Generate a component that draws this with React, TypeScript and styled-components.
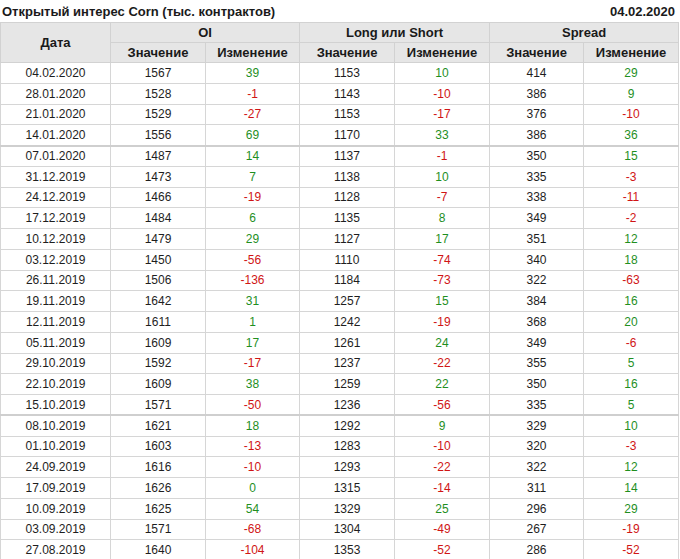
import React from "react";
import styled, { createGlobalStyle } from "styled-components";

const Global = createGlobalStyle`
  html, body { margin: 0; padding: 0; background: #fff; }
  body { font-family: "Liberation Sans", Arial, sans-serif; color: #1e1e1e; }
`;

const Page = styled.div`
  width: 679px;
`;

const TitleBar = styled.div`
  display: flex;
  justify-content: space-between;
  align-items: center;
  height: 22px;
  padding: 0 4px 0 2px;
  font-size: 13px;
  font-weight: bold;
  color: #1a1a1a;
`;

const Table = styled.table`
  width: 679px;
  border-collapse: collapse;
  table-layout: fixed;
  font-size: 12px;
`;

const HeadCell = styled.th`
  background: #e6e6e6;
  border: 1px solid #d2d2d2;
  font-size: 13px;
  font-weight: bold;
  color: #1a1a1a;
  text-align: center;
  padding: 0;
  height: 19px;
`;

const Row = styled.tr<{ $thick?: boolean }>`
  height: 20.75px;
  & > td {
    border-top: ${(p) => (p.$thick ? "2px solid #cfcfcf" : "1px solid #d6d6d6")};
  }
`;

const Cell = styled.td<{ $tone?: "pos" | "neg" }>`
  border: 1px solid #d6d6d6;
  text-align: center;
  padding: 0;
  color: ${(p) => (p.$tone === "pos" ? "#1f8f1f" : p.$tone === "neg" ? "#d01515" : "#1e1e1e")};
`;

type R = [string, number, number, number, number, number, number];

const rows: R[] = [
  ["04.02.2020", 1567, 39, 1153, 10, 414, 29],
  ["28.01.2020", 1528, -1, 1143, -10, 386, 9],
  ["21.01.2020", 1529, -27, 1153, -17, 376, -10],
  ["14.01.2020", 1556, 69, 1170, 33, 386, 36],
  ["07.01.2020", 1487, 14, 1137, -1, 350, 15],
  ["31.12.2019", 1473, 7, 1138, 10, 335, -3],
  ["24.12.2019", 1466, -19, 1128, -7, 338, -11],
  ["17.12.2019", 1484, 6, 1135, 8, 349, -2],
  ["10.12.2019", 1479, 29, 1127, 17, 351, 12],
  ["03.12.2019", 1450, -56, 1110, -74, 340, 18],
  ["26.11.2019", 1506, -136, 1184, -73, 322, -63],
  ["19.11.2019", 1642, 31, 1257, 15, 384, 16],
  ["12.11.2019", 1611, 1, 1242, -19, 368, 20],
  ["05.11.2019", 1609, 17, 1261, 24, 349, -6],
  ["29.10.2019", 1592, -17, 1237, -22, 355, 5],
  ["22.10.2019", 1609, 38, 1259, 22, 350, 16],
  ["15.10.2019", 1571, -50, 1236, -56, 335, 5],
  ["08.10.2019", 1621, 18, 1292, 9, 329, 10],
  ["01.10.2019", 1603, -13, 1283, -10, 320, -3],
  ["24.09.2019", 1616, -10, 1293, -22, 322, 12],
  ["17.09.2019", 1626, 0, 1315, -14, 311, 14],
  ["10.09.2019", 1625, 54, 1329, 25, 296, 29],
  ["03.09.2019", 1571, -68, 1304, -49, 267, -19],
  ["27.08.2019", 1640, -104, 1353, -52, 286, -52],
];

const thickBefore = new Set(["07.01.2020", "08.10.2019"]);

const tone = (n: number) => (n < 0 ? "neg" : "pos") as "pos" | "neg";

const widths = [110, 95, 94, 95, 95, 94, 95];

export default function App() {
  return (
    <Page>
      <Global />
      <TitleBar>
        <span>Открытый интерес Corn (тыс. контрактов)</span>
        <span>04.02.2020</span>
      </TitleBar>
      <Table>
        <colgroup>
          {widths.map((w, i) => (
            <col key={i} style={{ width: w }} />
          ))}
        </colgroup>
        <thead>
          <tr>
            <HeadCell rowSpan={2}>Дата</HeadCell>
            <HeadCell colSpan={2}>OI</HeadCell>
            <HeadCell colSpan={2}>Long или Short</HeadCell>
            <HeadCell colSpan={2}>Spread</HeadCell>
          </tr>
          <tr>
            <HeadCell>Значение</HeadCell>
            <HeadCell>Изменение</HeadCell>
            <HeadCell>Значение</HeadCell>
            <HeadCell>Изменение</HeadCell>
            <HeadCell>Значение</HeadCell>
            <HeadCell>Изменение</HeadCell>
          </tr>
        </thead>
        <tbody>
          {rows.map((r) => (
            <Row key={r[0]} $thick={thickBefore.has(r[0])}>
              <Cell>{r[0]}</Cell>
              <Cell>{r[1]}</Cell>
              <Cell $tone={tone(r[2])}>{r[2]}</Cell>
              <Cell>{r[3]}</Cell>
              <Cell $tone={tone(r[4])}>{r[4]}</Cell>
              <Cell>{r[5]}</Cell>
              <Cell $tone={tone(r[6])}>{r[6]}</Cell>
            </Row>
          ))}
        </tbody>
      </Table>
    </Page>
  );
}
